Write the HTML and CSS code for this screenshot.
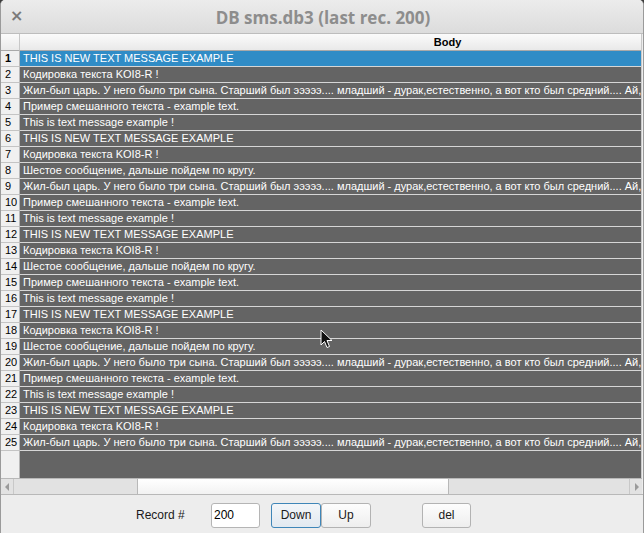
FILE: index.html
```html
<!DOCTYPE html>
<html>
<head>
<meta charset="utf-8">
<link rel="stylesheet" href="styles.css">
</head>
<body>
<div class="window">
  <div class="titlebar">
    <span class="close">×</span>
    <span class="title">DB sms.db3 (last rec. 200)</span>
  </div>
  <div class="frame">
    <div class="viewport">
      <div class="sheet">
        <div class="row head"><div class="num"></div><div class="cell">Body</div></div>
        <div class="row sel"><div class="num b">1</div><div class="cell">THIS IS NEW TEXT MESSAGE EXAMPLE</div></div>
        <div class="row"><div class="num">2</div><div class="cell">Кодировка текста KOI8-R !</div></div>
        <div class="row"><div class="num">3</div><div class="cell">Жил-был царь. У него было три сына. Старший был эээээ.... младший - дурак,естественно, а вот кто был средний.... Ай, не помню.</div></div>
        <div class="row"><div class="num">4</div><div class="cell">Пример смешанного текста - example text.</div></div>
        <div class="row"><div class="num">5</div><div class="cell">This is text message example !</div></div>
        <div class="row"><div class="num">6</div><div class="cell">THIS IS NEW TEXT MESSAGE EXAMPLE</div></div>
        <div class="row"><div class="num">7</div><div class="cell">Кодировка текста KOI8-R !</div></div>
        <div class="row"><div class="num">8</div><div class="cell">Шестое сообщение, дальше пойдем по кругу.</div></div>
        <div class="row"><div class="num">9</div><div class="cell">Жил-был царь. У него было три сына. Старший был эээээ.... младший - дурак,естественно, а вот кто был средний.... Ай, не помню.</div></div>
        <div class="row"><div class="num">10</div><div class="cell">Пример смешанного текста - example text.</div></div>
        <div class="row"><div class="num">11</div><div class="cell">This is text message example !</div></div>
        <div class="row"><div class="num">12</div><div class="cell">THIS IS NEW TEXT MESSAGE EXAMPLE</div></div>
        <div class="row"><div class="num">13</div><div class="cell">Кодировка текста KOI8-R !</div></div>
        <div class="row"><div class="num">14</div><div class="cell">Шестое сообщение, дальше пойдем по кругу.</div></div>
        <div class="row"><div class="num">15</div><div class="cell">Пример смешанного текста - example text.</div></div>
        <div class="row"><div class="num">16</div><div class="cell">This is text message example !</div></div>
        <div class="row"><div class="num">17</div><div class="cell">THIS IS NEW TEXT MESSAGE EXAMPLE</div></div>
        <div class="row"><div class="num">18</div><div class="cell">Кодировка текста KOI8-R !</div></div>
        <div class="row"><div class="num">19</div><div class="cell">Шестое сообщение, дальше пойдем по кругу.</div></div>
        <div class="row"><div class="num">20</div><div class="cell">Жил-был царь. У него было три сына. Старший был эээээ.... младший - дурак,естественно, а вот кто был средний.... Ай, не помню.</div></div>
        <div class="row"><div class="num">21</div><div class="cell">Пример смешанного текста - example text.</div></div>
        <div class="row"><div class="num">22</div><div class="cell">This is text message example !</div></div>
        <div class="row"><div class="num">23</div><div class="cell">THIS IS NEW TEXT MESSAGE EXAMPLE</div></div>
        <div class="row"><div class="num">24</div><div class="cell">Кодировка текста KOI8-R !</div></div>
        <div class="row"><div class="num">25</div><div class="cell">Жил-был царь. У него было три сына. Старший был эээээ.... младший - дурак,естественно, а вот кто был средний.... Ай, не помню.</div></div>
        <div class="row filler"><div class="num"></div><div class="cell"></div></div>
      </div>
    </div>
    <div class="hscroll">
      <div class="arrow"><svg width="5" height="8" viewBox="0 0 5 8"><path d="M4 0 L0 4 L4 8 Z" fill="#9a9a9a"/></svg></div>
      <div class="trough">
        <div class="gap-l"></div>
        <div class="thumb"></div>
        <div class="gap-r"></div>
      </div>
      <div class="arrow"><svg width="5" height="8" viewBox="0 0 5 8"><path d="M1 0 L5 4 L1 8 Z" fill="#9a9a9a"/></svg></div>
    </div>
  </div>
  <div class="footer">
    <span class="label">Record #</span>
    <input class="field" type="text" value="200">
    <div class="btns">
      <button class="btn focus">Down</button>
      <button class="btn">Up</button>
    </div>
    <button class="btn del">del</button>
  </div>
  <svg class="cursor" width="14" height="20" viewBox="0 0 14 20"><path d="M1 1 L1 16 L4.5 12.5 L7 18.5 L9.5 17.5 L7 11.5 L12 11.5 Z" fill="#111" stroke="#fff" stroke-width="1"/></svg>
</div>
</body>
</html>
```
FILE: styles.css
```css
html, body {
  margin: 0;
  padding: 0;
  background: #3c3c3c;
}
.window {
  position: relative;
  width: 642px;
  height: 533px;
  background: #ededed;
  border-left: 1px solid #9a9a9a;
  border-right: 1px solid #9a9a9a;
  display: flex;
  flex-direction: column;
  border-radius: 5px 5px 0 0;
  overflow: hidden;
  font-family: "Liberation Sans", Arial, sans-serif;
}
.titlebar {
  height: 34px;
  flex: none;
  display: flex;
  align-items: center;
  justify-content: center;
  position: relative;
  background: linear-gradient(#ececec, #dcdcdc);
  border-bottom: 1px solid #bdbdbd;
  box-sizing: border-box;
}
.close {
  position: absolute;
  left: 9px;
  top: 6px;
  font-family: "DejaVu Sans", sans-serif;
  font-size: 16px;
  font-weight: bold;
  color: #7a7a7a;
}
.title {
  font-family: "Open Sans", sans-serif;
  font-weight: bold;
  font-size: 17px;
  color: #8d8d8d;
  margin-left: 2px;
  margin-top: 1px;
}
.frame {
  height: 461px;
  flex: none;
  display: flex;
  flex-direction: column;
  border-bottom: 1px solid #b8b8b8;
  box-sizing: border-box;
}
.viewport {
  flex: 1;
  overflow: hidden;
  border-right: 1px solid #c9c9c9;
  margin-right: 1px;
  display: flex;
}
.sheet {
  width: 874px;
  flex: none;
  display: flex;
  flex-direction: column;
}
.row {
  display: flex;
  height: 16px;
  flex: none;
  font-size: 11px;
  line-height: 15px;
}
.num {
  width: 19px;
  flex: none;
  background: #f0f0f0;
  border-right: 1px solid #b8b8b8;
  border-bottom: 1px solid #c4c4c4;
  color: #000;
  padding-left: 4px;
  box-sizing: border-box;
  font-size: 11px;
}
.num.b { font-weight: bold; }
.cell {
  flex: 1;
  background: #646464;
  color: #ffffff;
  border-bottom: 1px solid #d6d6d6;
  padding-left: 3px;
  white-space: nowrap;
  overflow: hidden;
}
.row.sel .cell {
  background: #308cc6;
}
.row.head {
  height: 17px;
  line-height: 16px;
}
.row.head .num,
.row.head .cell {
  background: linear-gradient(#fbfbfb, #e9e9e9);
  border-bottom: 1px solid #a9a9a9;
  color: #000;
  font-weight: bold;
  text-align: center;
  padding-left: 0;
}
.row.head .num { border-right: 1px solid #c8c8c8; }
.row.filler {
  flex: 1;
}
.row.filler .cell { border-bottom: none; }
.row.filler .num { border-bottom: none; }
.hscroll {
  height: 15px;
  flex: none;
  display: flex;
  border-top: 1px solid #b8b8b8;
  background: #e2e2e2;
  margin-right: 1px;
}
.arrow {
  width: 12px;
  flex: none;
  display: flex;
  align-items: center;
  justify-content: center;
  border-right: 1px solid #c8c8c8;
}
.arrow:last-child {
  border-right: none;
  border-left: 1px solid #c8c8c8;
}
.trough {
  flex: 1;
  display: flex;
}
.gap-l { width: 123px; }
.thumb {
  width: 310px;
  background: linear-gradient(#ffffff, #f2f2f2);
  border-left: 1px solid #b8b8b8;
  border-right: 1px solid #b8b8b8;
}
.gap-r { flex: 1; }
.footer {
  flex: 1;
  display: flex;
  align-items: center;
  padding-top: 2px;
  font-size: 12px;
  color: #1a1a1a;
}
.label {
  margin-left: 135px;
  width: 75px;
}
.field {
  width: 49px;
  height: 25px;
  box-sizing: border-box;
  border: 1px solid #b5b5b5;
  border-radius: 3px;
  background: #fff;
  font-family: "Liberation Sans", Arial, sans-serif;
  font-size: 12px;
  padding: 0 0 0 2px;
  margin: 0;
  color: #000;
}
.btns {
  display: flex;
  margin-left: 11px;
}
.btn {
  width: 50px;
  height: 25px;
  box-sizing: border-box;
  border: 1px solid #b3b3b3;
  border-radius: 3px;
  background: linear-gradient(#fdfdfd, #eeeeee);
  font-family: "Liberation Sans", Arial, sans-serif;
  font-size: 12px;
  color: #1a1a1a;
  padding: 0;
  margin: 0;
}
.btn.focus {
  border-color: #3f86b8;
  background: linear-gradient(#f3f6f9, #e2e9f0);
}
.btn.del {
  margin-left: 51px;
  width: 49px;
}
.cursor {
  position: absolute;
  left: 319px;
  top: 329px;
}
```
